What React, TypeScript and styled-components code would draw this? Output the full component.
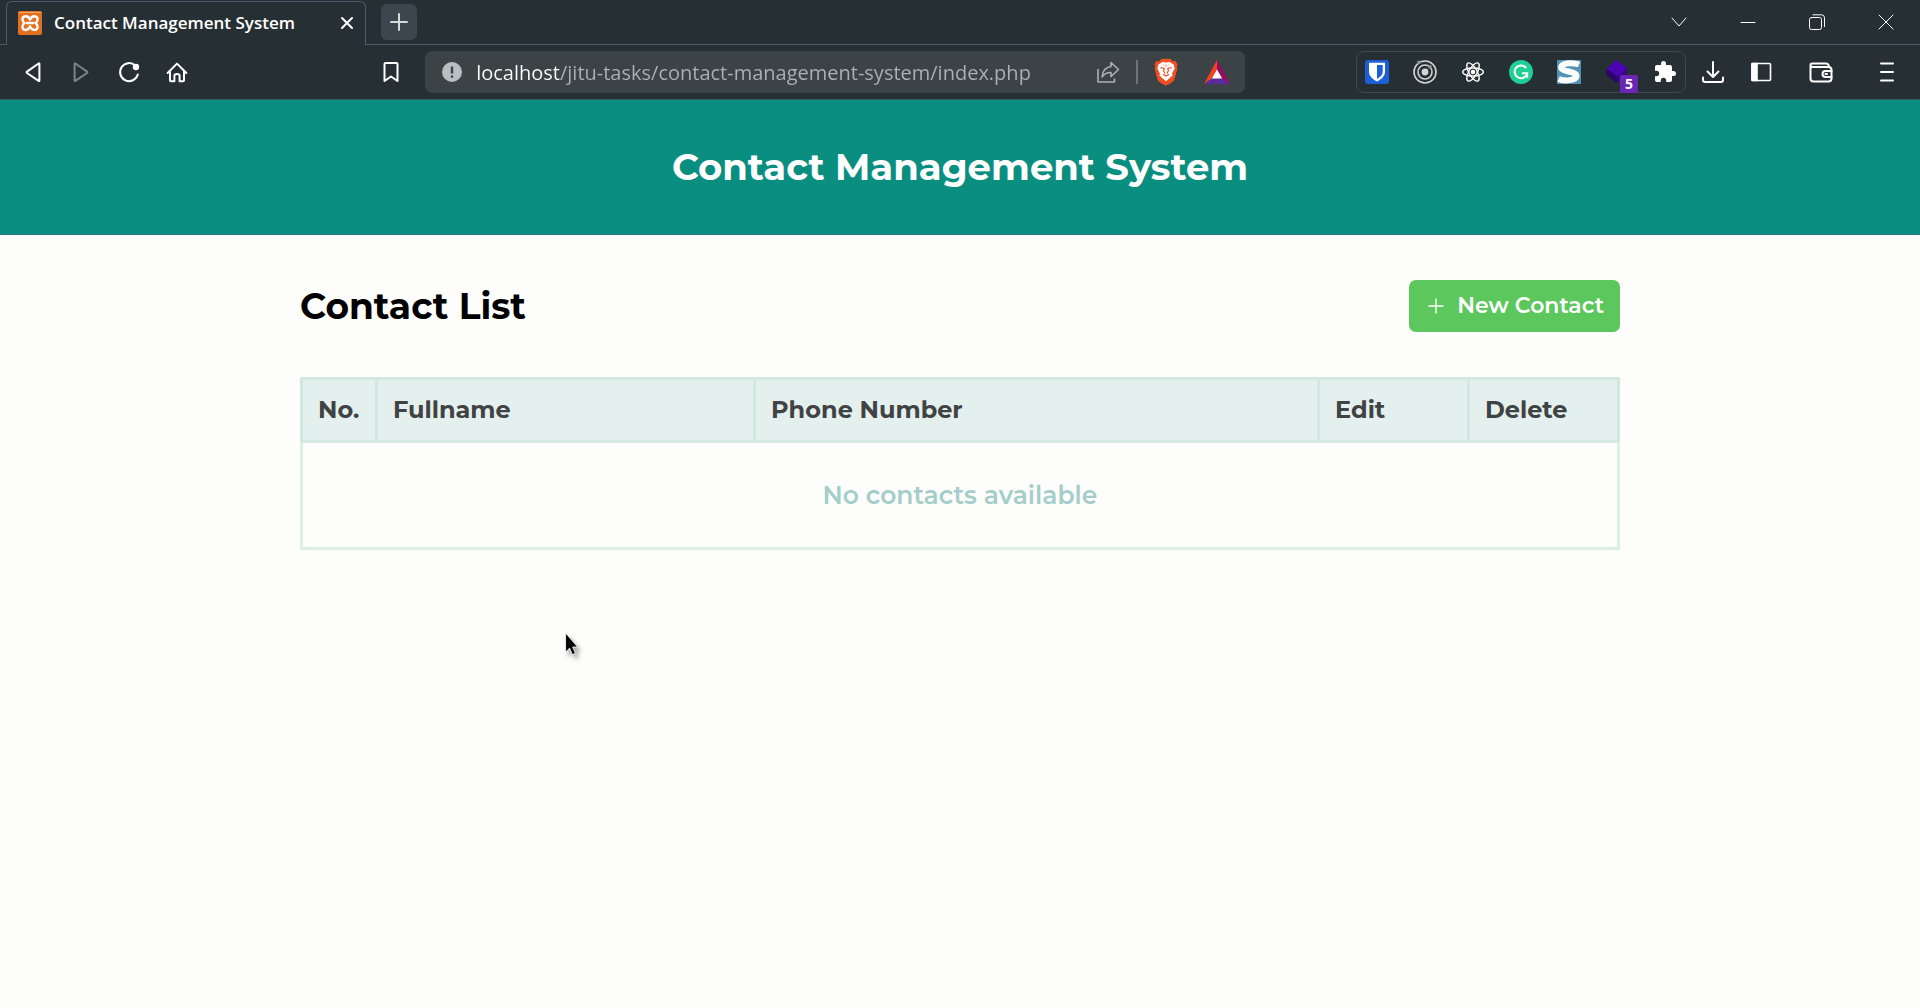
import React from "react";
import styled, { createGlobalStyle } from "styled-components";

const uiFont = `"Segoe UI", "Open Sans", "Noto Sans", sans-serif`;
const pageFont = `Montserrat, Inter, "Open Sans", sans-serif`;

const GlobalStyle = createGlobalStyle`
  * { box-sizing: border-box; }
  body { margin: 0; background: #fdfefc; }
  button, input { font: inherit; color: inherit; border: 0; padding: 0; background: none; }
  svg { display: block; }
`;

const Window = styled.div`
  display: flex;
  flex-direction: column;
  min-height: 100vh;
  overflow: hidden;
`;

const Chrome = styled.div`
  display: flex;
  flex-direction: column;
  background: #262f33;
  color: #ffffff;
  font-family: ${uiFont};
  border-bottom: 1px solid #3b5a5e;
`;

const TabStrip = styled.div`
  display: flex;
  height: 45px;
`;

const StripEdge = styled.div<{ $grow?: boolean }>`
  flex: ${(p) => (p.$grow ? "1 1 auto" : "0 0 6px")};
  display: flex;
  align-items: center;
  border-bottom: 1px solid #4c5c6c;
`;

const Tab = styled.div`
  display: flex;
  align-items: center;
  gap: 12px;
  width: 360px;
  margin-top: 1px;
  padding: 0 0 1px 11px;
  border: 1px solid #4c5c6c;
  border-bottom: 0;
  border-radius: 6px 6px 0 0;
`;

const TabTitle = styled.span`
  flex: 1;
  font-size: 17px;
  line-height: 24px;
  font-weight: 600;
  white-space: nowrap;
`;

const TabClose = styled.button`
  display: grid;
  place-items: center;
  width: 36px;
  height: 24px;
`;

const NewTab = styled.button`
  display: grid;
  place-items: center;
  width: 36px;
  height: 36px;
  margin-left: 15px;
  border-radius: 6px;
  background: #3b464f;
  color: #d5dadd;
`;

const WindowControls = styled.div`
  display: flex;
  margin-left: auto;
`;

const WindowButton = styled.button`
  display: grid;
  place-items: center;
  width: 69px;
  height: 44px;
`;

const Toolbar = styled.div`
  display: flex;
  align-items: center;
  height: 54px;
  padding: 0 9px;
`;

const ToolButton = styled.button<{ $gap?: number; $dim?: boolean }>`
  display: grid;
  place-items: center;
  flex: none;
  width: 48px;
  height: 40px;
  margin-left: ${(p) => p.$gap ?? 0}px;
  color: ${(p) => (p.$dim ? "#7c8486" : "#ffffff")};
`;

const Spacer = styled.div<{ $grow: number }>`
  flex: ${(p) => p.$grow} 1 0;
`;

const AddressBar = styled.div`
  display: flex;
  align-items: center;
  flex: 0 1 820px;
  height: 42px;
  margin-left: 10px;
  padding: 0 15px 0 17px;
  border-radius: 7px;
  background: #3b4346;
`;

const Address = styled.input`
  flex: 1;
  min-width: 0;
  height: 32px;
  margin-left: 14px;
  font-size: 20px;
  outline: 0;
  color: transparent;
  background: linear-gradient(90deg, #ffffff 84px, #a9b3b3 84px);
  background-clip: text;
  -webkit-background-clip: text;
`;

const AddressDivider = styled.span`
  width: 2px;
  height: 24px;
  margin: 0 16px;
  background: #6d7677;
`;

const AddressButton = styled.button<{ $gap?: number }>`
  margin-left: ${(p) => p.$gap ?? 0}px;
`;

const Extensions = styled.div`
  display: flex;
  align-items: center;
  gap: 24px;
  height: 42px;
  padding: 0 8px;
  border: 1px solid #3f474a;
  border-radius: 8px;
`;

const Extension = styled.button`
  position: relative;
  flex: none;
  width: 24px;
  height: 24px;
`;

const Badge = styled.span`
  position: absolute;
  left: 15px;
  top: 15px;
  width: 18px;
  height: 18px;
  border-radius: 2px;
  background: #6a26b4;
  font-size: 14px;
  line-height: 18px;
  font-weight: 700;
  text-align: center;
`;

const Banner = styled.header`
  padding: 43px 24px;
  background: #0a8e7f;
  border-bottom: 1px solid #2b7580;
  color: #ffffff;
  font-family: ${pageFont};
  text-align: center;
`;

const BannerTitle = styled.h1`
  margin: 0;
  font-size: 37px;
  line-height: 48px;
  font-weight: 700;
`;

const Page = styled.main`
  width: 100%;
  max-width: 1368px;
  margin: 0 auto;
  padding: 45px 24px;
  font-family: ${pageFont};
`;

const ListHeader = styled.div`
  display: flex;
  align-items: center;
  justify-content: space-between;
  margin-bottom: 45px;
`;

const ListTitle = styled.h2`
  margin: 0;
  color: #000000;
  font-size: 36px;
  line-height: 48px;
  font-weight: 700;
`;

const NewContact = styled.button`
  display: flex;
  align-items: center;
  justify-content: center;
  gap: 13px;
  height: 52px;
  padding: 0 16px 0 19px;
  border-radius: 7px;
  background: #5cc75c;
  color: #ffffff;
  font-size: 22px;
  line-height: 32px;
  font-weight: 600;
`;

const Table = styled.table`
  width: 100%;
  table-layout: fixed;
  border-collapse: collapse;
  border: 3px solid #dcefe6;
`;

const HeadCell = styled.th<{ $width?: number }>`
  width: ${(p) => (p.$width ? `${p.$width}px` : "auto")};
  height: 63px;
  padding: 0 15px;
  border: 3px solid #d3e8e0;
  background: #e4f0ee;
  color: #3f4343;
  font-size: 24px;
  line-height: 32px;
  font-weight: 700;
  text-align: left;
  white-space: nowrap;
`;

const EmptyCell = styled.td`
  height: 107px;
  padding: 0;
  color: #a5cdc9;
  font-size: 25px;
  line-height: 32px;
  font-weight: 600;
  text-align: center;
`;

const Pointer = styled.svg`
  position: absolute;
  left: 561px;
  top: 631px;
  filter: drop-shadow(3px 4px 2px rgba(0, 0, 0, 0.35));
`;

type IconProps = { w?: number; h?: number; sw?: number; children: React.ReactNode };

const Line = ({ w = 24, h = 24, sw = 2, children }: IconProps) => (
  <svg width={w} height={h} viewBox={`0 0 ${w} ${h}`} fill="none" stroke="currentColor"
    strokeWidth={sw} strokeLinecap="round" strokeLinejoin="round" aria-hidden="true">
    {children}
  </svg>
);

const Favicon = () => (
  <Line>
    <rect width="24" height="24" rx="2" fill="#e2701f" stroke="none" />
    <path d="M1 1.5H23" stroke="#f3a668" strokeWidth="1" />
    <path strokeWidth="2.4" stroke="#fff"
      d="M12 8.6C11 6 9.5 5.2 7.6 5.2C5 5.2 4 7.4 4.6 9.2C4.9 10.3 5.8 11.2 6.2 12C5.8 12.8 4.9 13.7 4.6 14.8C4 16.8 5 19 7.6 19C9.5 19 11 18 12 15.4C13 18 14.5 19 16.4 19C19 19 20 16.8 19.4 14.8C19.1 13.7 18.2 12.8 17.8 12C18.2 11.2 19.1 10.3 19.4 9.2C20 7.4 19 5.2 16.4 5.2C14.5 5.2 13 6 12 8.6Z" />
    <path d="M8.6 12H15.4" stroke="#fff" strokeWidth="2.6" />
  </Line>
);

const Brave = () => (
  <svg width="24" height="28" viewBox="0 0 24 28" aria-hidden="true">
    <path d="M7.5 .8H16.5L18.6 3.2L21.5 3L23.6 6.3L22.8 8.5L23.4 10.8L20.4 21.4C19.8 23.3 17.5 25 12 27.6C6.5 25 4.2 23.3 3.6 21.4L.6 10.8L1.2 8.5L.4 6.3L2.5 3L5.4 3.2Z" fill="#f04e23" />
    <path d="M12 4.6L15.5 4L19.6 6.6L20.6 10.4L18 15.4L18.6 17.6L15.4 20.3L12 23.3L8.6 20.3L5.4 17.6L6 15.4L3.4 10.4L4.4 6.6L8.5 4Z" fill="#fff" />
    <path d="M6.4 9.6L10.2 10.4L9.6 12.8L11 15.6M17.6 9.6L13.8 10.4L14.4 12.8L13 15.6M9 16.2L12 18L15 16.2" fill="none" stroke="#f04e23" strokeWidth="1.2" />
    <path d="M12 5.5V9M9.4 6.4L11 8.5M14.6 6.4L13 8.5" stroke="#f7a58d" strokeWidth=".9" />
  </svg>
);

const Bat = () => (
  <svg width="26" height="24" viewBox="0 0 26 24" aria-hidden="true">
    <path d="M13 0L0 24L8 18.5L13 9.5Z" fill="#f4401f" />
    <path d="M13 0L26 24L18 18.5L13 9.5Z" fill="#9b0a62" />
    <path d="M0 24H26L18 18.5H8Z" fill="#5c2a9c" />
    <path d="M13 9.5L18.2 18.5H7.8Z" fill="#fff" />
  </svg>
);

const Bitwarden = () => (
  <svg width="24" height="24" viewBox="0 0 24 24" aria-hidden="true">
    <rect width="24" height="24" rx="3" fill="#1c5fd6" />
    <path d="M4 2.8H20V12C20 16.3 16 19.4 12 21.5C8 19.4 4 16.3 4 12Z" fill="#fff" />
    <path d="M12 5H17.7V12C17.7 14.9 15 17.2 12 18.9Z" fill="#1c5fd6" />
  </svg>
);

const Rings = () => (
  <svg width="24" height="24" viewBox="0 0 24 24" fill="none" stroke="#d2d5d5" aria-hidden="true">
    <circle cx="12" cy="12" r="11" strokeWidth="1.6" />
    <circle cx="12" cy="12" r="7" strokeWidth="1.6" />
    <circle cx="12" cy="12" r="3.4" fill="#d2d5d5" stroke="none" />
    <circle cx="6" cy="2.4" r="1.9" fill="#8b9292" stroke="none" />
    <circle cx="17" cy="7" r="1.9" fill="#8b9292" stroke="none" />
  </svg>
);

const Atom = () => (
  <Line sw={1.4}>
    <ellipse cx="12" cy="12" rx="10.3" ry="4" />
    <ellipse cx="12" cy="12" rx="10.3" ry="4" transform="rotate(60 12 12)" />
    <ellipse cx="12" cy="12" rx="10.3" ry="4" transform="rotate(120 12 12)" />
    <circle cx="12" cy="12" r="1.6" fill="currentColor" />
  </Line>
);

const Grammarly = () => (
  <svg width="24" height="24" viewBox="0 0 24 24" fill="none" aria-hidden="true">
    <circle cx="12" cy="12" r="12" fill="#1fcf95" />
    <path d="M17.2 8A6.4 6.4 0 1 0 17.8 14.6" stroke="#fff" strokeWidth="2" />
    <path d="M13 13.2H18.2V17.8" stroke="#fff" strokeWidth="2" />
  </svg>
);

const Stylus = () => (
  <svg width="24" height="24" viewBox="0 0 24 24" fill="none" aria-hidden="true">
    <rect width="24" height="24" fill="#5192b6" />
    <path d="M22 4.5C17 2.5 5 2.5 4.2 7C3.5 12 19.5 11 19.5 16C19.5 20.5 7 21.5 1.5 19" stroke="#fff" strokeWidth="6" />
  </svg>
);

const Cube = () => (
  <svg width="24" height="24" viewBox="0 0 24 24" aria-hidden="true">
    <path d="M11 0L22 7.5L13 16.5L1.5 9Z" fill="#4a04b4" />
    <path d="M1.5 9L13 16.5L11.5 23L1 14.5Z" fill="#2b0468" />
    <path d="M22 7.5V14L11.5 23L13 16.5Z" fill="#3a0590" />
  </svg>
);

const Puzzle = () => (
  <svg width="24" height="24" viewBox="0 0 24 24" aria-hidden="true">
    <path fill="#fff"
      d="M20.5 11H19V7c0-1.1-.9-2-2-2h-4V3.5a2.5 2.5 0 0 0-5 0V5H4c-1.1 0-2 .9-2 2v3.8h1.5a2.7 2.7 0 0 1 0 5.4H2V20c0 1.1.9 2 2 2h3.8v-1.5a2.7 2.7 0 0 1 5.4 0V22H17c1.1 0 2-.9 2-2v-4h1.5a2.5 2.5 0 0 0 0-5Z" />
  </svg>
);

export default function App() {
  return (
    <Window>
      <GlobalStyle />
      <Chrome>
        <TabStrip>
          <StripEdge />
          <Tab>
            <Favicon />
            <TabTitle>Contact Management System</TabTitle>
            <TabClose aria-label="Close tab">
              <Line w={14} h={14}><path d="M2 2L12 12M12 2L2 12" /></Line>
            </TabClose>
          </Tab>
          <StripEdge $grow>
            <NewTab aria-label="New tab">
              <Line w={18} h={18}><path d="M9 1V17M1 9H17" /></Line>
            </NewTab>
            <WindowControls>
              <WindowButton aria-label="Search tabs">
                <Line w={16} h={10} sw={1}><path d="M1 1L8 9L15 1" /></Line>
              </WindowButton>
              <WindowButton aria-label="Minimize">
                <Line w={16} h={3} sw={1}><path d="M1 1.5H15" /></Line>
              </WindowButton>
              <WindowButton aria-label="Restore">
                <Line w={16} h={16} sw={1}>
                  <rect x=".5" y="3.5" width="12" height="12" rx="2" />
                  <path d="M4 .8H12.5A3 3 0 0 1 15.5 3.8V12.5" />
                </Line>
              </WindowButton>
              <WindowButton aria-label="Close window">
                <Line w={16} h={16} sw={1}><path d="M1 1L15 15M15 1L1 15" /></Line>
              </WindowButton>
            </WindowControls>
          </StripEdge>
        </TabStrip>
        <Toolbar>
          <ToolButton aria-label="Back">
            <Line><path d="M18.4 4V20.6Q18.4 21.4 17.6 20.9L6 13Q5.2 12.3 6 11.6L17.6 3.5Q18.4 3 18.4 4Z" /></Line>
          </ToolButton>
          <ToolButton aria-label="Forward" $dim>
            <Line><path d="M5.6 4V20.6Q5.6 21.4 6.4 20.9L18 13Q18.8 12.3 18 11.6L6.4 3.5Q5.6 3 5.6 4Z" /></Line>
          </ToolButton>
          <ToolButton aria-label="Reload">
            <Line>
              <path d="M18.2 5.5A9 9 0 1 0 20.8 14.5" />
              <circle cx="19" cy="7" r="2.2" fill="currentColor" />
            </Line>
          </ToolButton>
          <ToolButton aria-label="Home">
            <Line><path d="M2.6 13L12 3.6L21.4 13M5 11V20.3Q5 21.2 5.9 21.2H9.4V15.6Q9.4 14 12 14T14.6 15.6V21.2H18.1Q19 21.2 19 20.3V11" /></Line>
          </ToolButton>
          <Spacer $grow={3} />
          <ToolButton aria-label="Bookmark this page">
            <Line><path d="M6.5 3H17.5Q18.5 3 18.5 4V21L12 16.5L5.5 21V4Q5.5 3 6.5 3Z" /></Line>
          </ToolButton>
          <AddressBar>
            <AddressButton aria-label="Site information">
              <svg width="20" height="20" viewBox="0 0 20 20" aria-hidden="true">
                <circle cx="10" cy="10" r="10" fill="#b9bfc0" />
                <path d="M10 4.5V11.5M10 13.5V15.7" stroke="#3b4346" strokeWidth="2.4" />
              </svg>
            </AddressButton>
            <Address aria-label="Address" defaultValue="localhost/jitu-tasks/contact-management-system/index.php" spellCheck={false} />
            <AddressButton aria-label="Share this page">
              <svg width="24" height="24" viewBox="0 0 24 24" fill="none" stroke="#aab2b2" strokeWidth="1.6" strokeLinejoin="round" aria-hidden="true">
                <path d="M2 9V22H18.5V18.5" />
                <path d="M15 2.5L22.5 9.5L15 16.5V12.5C11 12.3 8.5 13.6 6 17C6.5 11 9.5 7.2 15 6.5Z" />
              </svg>
            </AddressButton>
            <AddressDivider />
            <AddressButton aria-label="Brave Shields"><Brave /></AddressButton>
            <AddressButton aria-label="Brave Rewards" $gap={26}><Bat /></AddressButton>
          </AddressBar>
          <Spacer $grow={2} />
          <Extensions>
            <Extension aria-label="Bitwarden"><Bitwarden /></Extension>
            <Extension aria-label="Focus timer"><Rings /></Extension>
            <Extension aria-label="React Developer Tools"><Atom /></Extension>
            <Extension aria-label="Grammarly"><Grammarly /></Extension>
            <Extension aria-label="Stylus"><Stylus /></Extension>
            <Extension aria-label="Blocks"><Cube /><Badge>5</Badge></Extension>
            <Extension aria-label="Extensions"><Puzzle /></Extension>
          </Extensions>
          <ToolButton aria-label="Downloads" $gap={3}>
            <Line><path d="M12 2V16.5M6.5 11.5L12 17L17.5 11.5M2 17.5V20Q2 22 4 22H20Q22 22 22 20V17.5" /></Line>
          </ToolButton>
          <ToolButton aria-label="Sidebar">
            <Line sw={1.6}>
              <rect x="3" y="3.5" width="18.5" height="17" rx="1" />
              <path d="M3 3.5H8V20.5H3Z" fill="currentColor" />
            </Line>
          </ToolButton>
          <ToolButton aria-label="Wallet" $gap={12}>
            <Line>
              <path d="M1.5 6V18.5Q1.5 21.5 4.5 21.5H19.5Q22.5 21.5 22.5 18.5V10Q22.5 7 19.5 7H3.5Q1.5 7 1.5 5.2T3.5 3.5H17Q19.5 3.5 20 6.5" />
              <path d="M22.5 11H16.5A3 3 0 0 0 16.5 17H22.5M16.5 14H18" />
            </Line>
          </ToolButton>
          <ToolButton aria-label="Menu" $gap={18}>
            <Line><path d="M6 3.5H18M6 12H18M6 20.5H18" /></Line>
          </ToolButton>
        </Toolbar>
      </Chrome>

      <Banner>
        <BannerTitle>Contact Management System</BannerTitle>
      </Banner>

      <Page>
        <ListHeader>
          <ListTitle>Contact List</ListTitle>
          <NewContact>
            <Line w={16} h={16} sw={1.4}><path d="M8 1V15M1 8H15" /></Line>
            New Contact
          </NewContact>
        </ListHeader>
        <Table>
          <thead>
            <tr>
              <HeadCell scope="col" $width={75}>No.</HeadCell>
              <HeadCell scope="col" $width={378}>Fullname</HeadCell>
              <HeadCell scope="col">Phone Number</HeadCell>
              <HeadCell scope="col" $width={150}>Edit</HeadCell>
              <HeadCell scope="col" $width={150}>Delete</HeadCell>
            </tr>
          </thead>
          <tbody>
            <tr>
              <EmptyCell colSpan={5}>No contacts available</EmptyCell>
            </tr>
          </tbody>
        </Table>
      </Page>

      <Pointer width="18" height="28" viewBox="0 0 18 28" aria-hidden="true">
        <path d="M4.6 2V21.2L8.6 17.1L11.4 23.6L14.4 22.3L11.6 16H16.6Z" fill="#000" stroke="#fff" strokeWidth=".8" />
      </Pointer>
    </Window>
  );
}
